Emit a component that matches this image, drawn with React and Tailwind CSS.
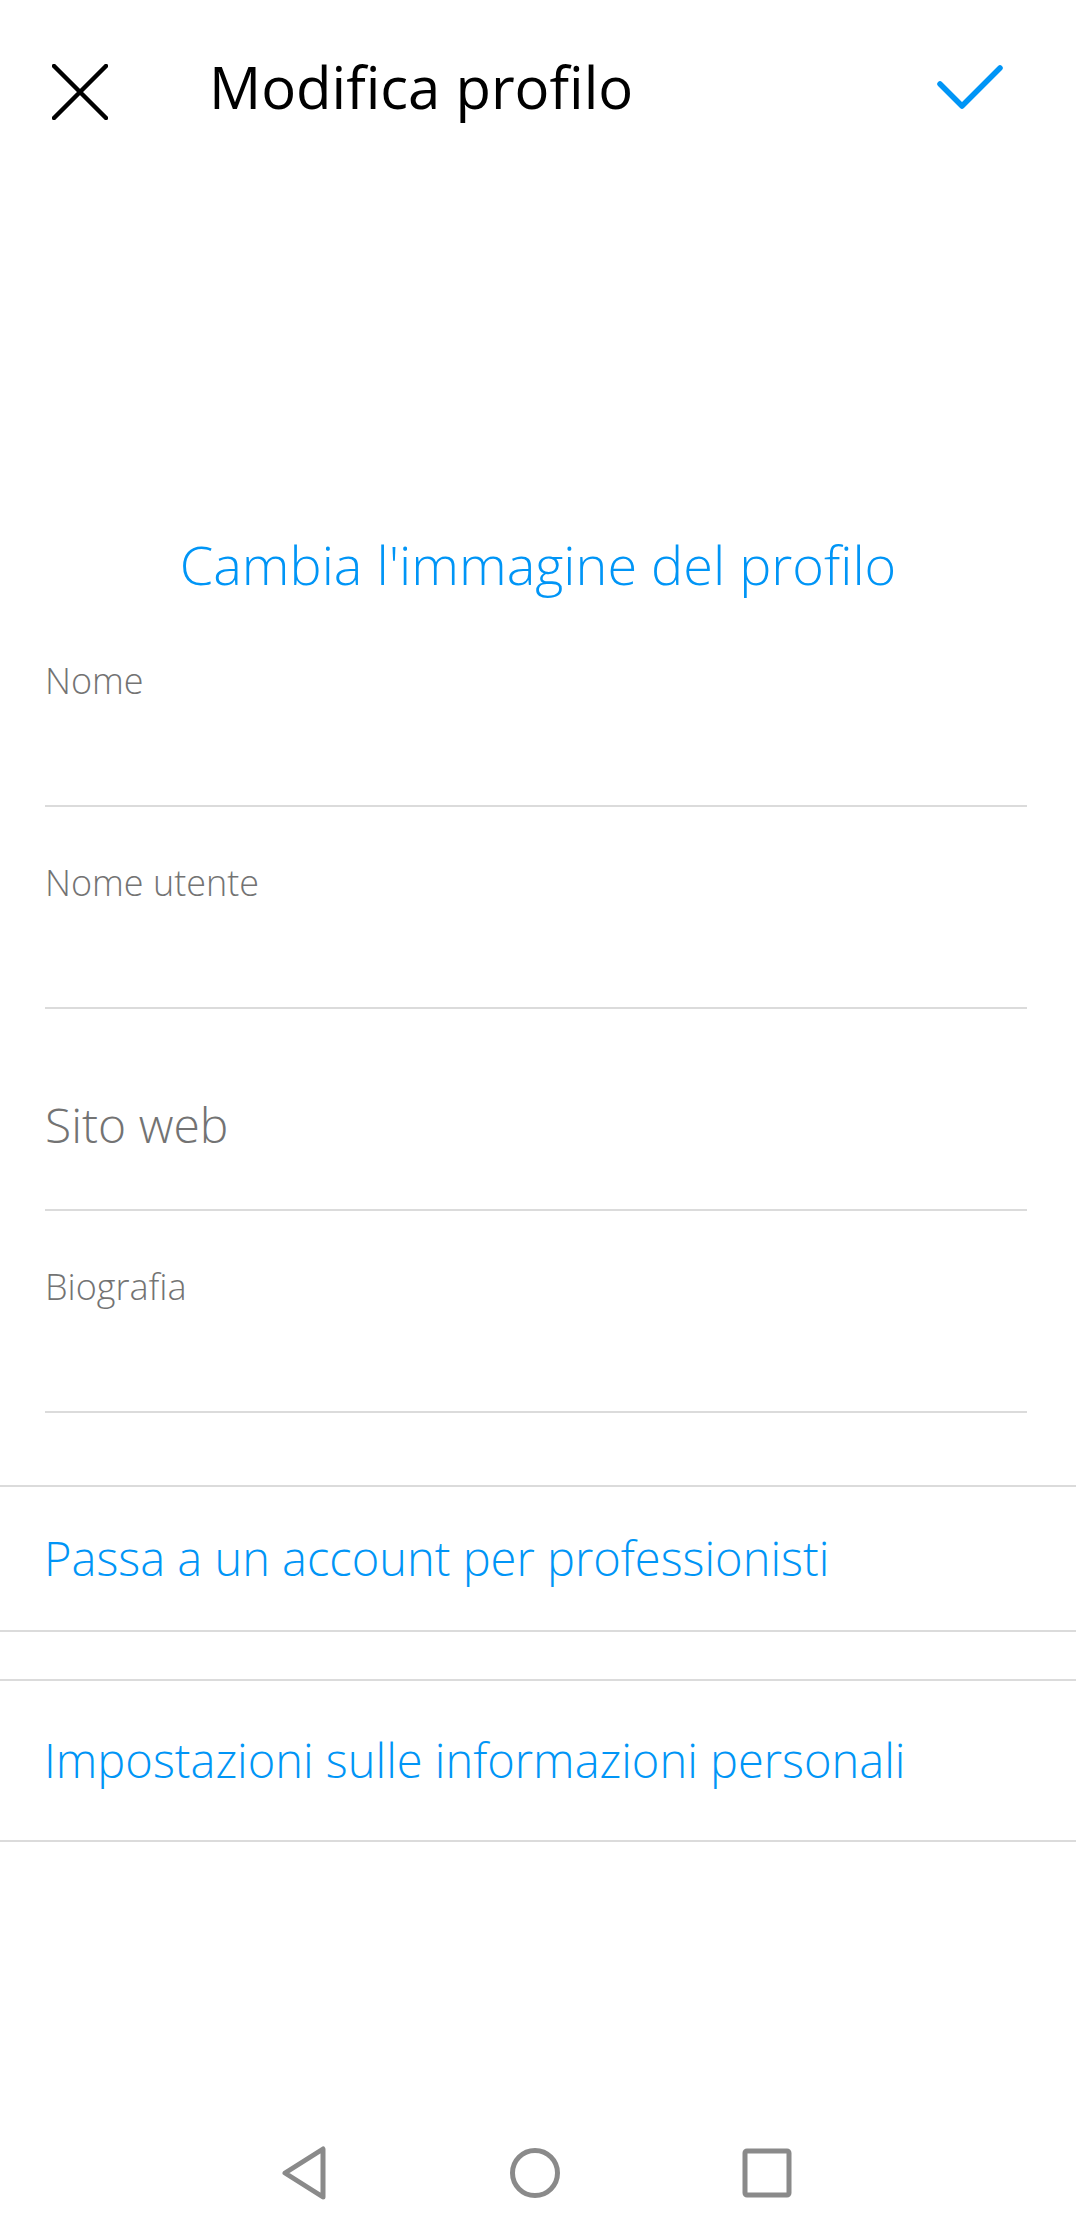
const fields = [
  { label: 'Nome' },
  { label: 'Nome utente' },
  { label: 'Sito web', placeholder: true },
  { label: 'Biografia' },
];

function Field({ label, placeholder }) {
  if (placeholder) {
    return (
      <div className="h-[202px] border-b-2 border-[#dbdbdb] pt-[92px]">
        <p className="text-[48px] leading-none text-[#737373]">{label}</p>
      </div>
    );
  }
  return (
    <div className="h-[202px] border-b-2 border-[#dbdbdb] pt-[58px]">
      <p className="text-[36px] leading-none text-[#737373]">{label}</p>
    </div>
  );
}

export default function App() {
  return (
    <main className="flex h-[2236px] w-[1076px] flex-col bg-white font-['Open_Sans',sans-serif] font-light">
      <header className="flex h-[180px] items-start">
        <svg className="ml-[52px] mt-[64px] h-[56px] w-[56px]" viewBox="0 0 56 56" fill="none" stroke="#000" strokeWidth="4.5" strokeLinecap="round">
          <path d="M2 2 L54 54 M54 2 L2 54" />
        </svg>
        <h1 className="ml-[101px] mt-[58px] text-[58px] leading-none text-black font-normal">Modifica profilo</h1>
        <svg className="ml-auto mr-[72px] mt-[62px] h-[50px] w-[72px]" viewBox="0 0 72 50" fill="none" stroke="#0095f6" strokeWidth="5.5" strokeLinecap="round" strokeLinejoin="round">
          <path d="M8 22 L30 44 L68 6" />
        </svg>
      </header>

      <div className="h-[357px]" />

      <p className="text-center text-[54px] leading-none text-[#0095f6]">Cambia l'immagine del profilo</p>

      <div className="mt-[14px] pl-[45px] pr-[49px]">
        {fields.map((f) => (
          <Field key={f.label} label={f.label} placeholder={f.placeholder} />
        ))}
      </div>

      <div className="mt-[72px] flex h-[147px] items-center border-y-2 border-[#dbdbdb] pl-[44px]">
        <p className="text-[47px] leading-none text-[#0095f6]">Passa a un account per professionisti</p>
      </div>

      <div className="mt-[47px] flex h-[163px] items-center border-y-2 border-[#dbdbdb] pl-[44px]">
        <p className="text-[47px] leading-none text-[#0095f6]">Impostazioni sulle informazioni personali</p>
      </div>

      <div className="flex-1" />

      <nav className="flex h-[126px] items-center pl-[281px]">
        <svg className="h-[54px] w-[48px]" viewBox="0 0 48 54" fill="none" stroke="#8a8a8a" strokeWidth="5" strokeLinejoin="round">
          <path d="M4 27 L42 3 L42 51 Z" />
        </svg>
        <svg className="ml-[179px] h-[54px] w-[54px]" viewBox="0 0 54 54" fill="none" stroke="#8a8a8a" strokeWidth="5">
          <ellipse cx="27" cy="27" rx="22.5" ry="22.5" />
        </svg>
        <svg className="ml-[180px] h-[50px] w-[50px]" viewBox="0 0 50 50" fill="none" stroke="#8a8a8a" strokeWidth="5">
          <rect x="3" y="3" width="44" height="44" rx="2" />
        </svg>
      </nav>
    </main>
  );
}
